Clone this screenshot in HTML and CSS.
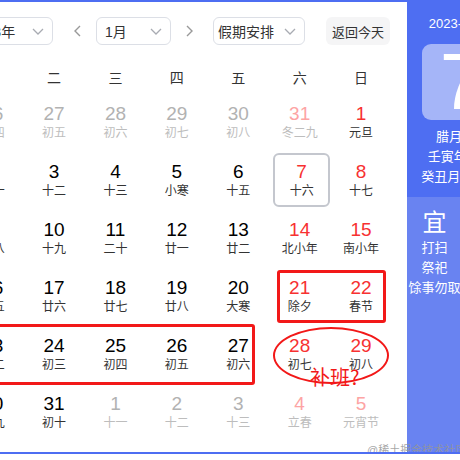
FILE: index.html
```html
<!DOCTYPE html>
<html lang="zh-CN">
<head>
    <meta charset="UTF-8">
    <title>万年历</title>
    <link rel="stylesheet" href="styles.css">
</head>
<body>
    <div class="page">
        <div class="cal">
            <div class="toolbar">
                <div class="select year">
                    <span>2023年</span>
                    <svg class="chev" viewBox="0 0 12 7"><polyline points="1,1 6,6 11,1"/></svg>
                </div>
                <span class="arrow"><svg viewBox="0 0 8 12"><polyline points="7,1 2,6 7,11"/></svg></span>
                <div class="select month">
                    <span>1月</span>
                    <svg class="chev" viewBox="0 0 12 7"><polyline points="1,1 6,6 11,1"/></svg>
                </div>
                <span class="arrow next"><svg viewBox="0 0 8 12"><polyline points="1,1 6,6 1,11"/></svg></span>
                <div class="select holiday">
                    <span>假期安排</span>
                    <svg class="chev" viewBox="0 0 12 7"><polyline points="1,1 6,6 11,1"/></svg>
                </div>
                <button class="back-btn">返回今天</button>
            </div>

            <div class="weekdays">
                <span>一</span><span>二</span><span>三</span><span>四</span><span>五</span><span>六</span><span>日</span>
            </div>

            <div class="days">
                <div class="day other"><b>26</b><i>初四</i></div>
                <div class="day other"><b>27</b><i>初五</i></div>
                <div class="day other"><b>28</b><i>初六</i></div>
                <div class="day other"><b>29</b><i>初七</i></div>
                <div class="day other"><b>30</b><i>初八</i></div>
                <div class="day other red"><b>31</b><i>冬二九</i></div>
                <div class="day red"><b>1</b><i>元旦</i></div>

                <div class="day"><b>2</b><i>十一</i></div>
                <div class="day"><b>3</b><i>十二</i></div>
                <div class="day"><b>4</b><i>十三</i></div>
                <div class="day"><b>5</b><i>小寒</i></div>
                <div class="day"><b>6</b><i>十五</i></div>
                <div class="day red today"><b>7</b><i>十六</i></div>
                <div class="day red"><b>8</b><i>十七</i></div>

                <div class="day"><b>9</b><i>十八</i></div>
                <div class="day"><b>10</b><i>十九</i></div>
                <div class="day"><b>11</b><i>二十</i></div>
                <div class="day"><b>12</b><i>廿一</i></div>
                <div class="day"><b>13</b><i>廿二</i></div>
                <div class="day red"><b>14</b><i>北小年</i></div>
                <div class="day red"><b>15</b><i>南小年</i></div>

                <div class="day"><b>16</b><i>廿五</i></div>
                <div class="day"><b>17</b><i>廿六</i></div>
                <div class="day"><b>18</b><i>廿七</i></div>
                <div class="day"><b>19</b><i>廿八</i></div>
                <div class="day"><b>20</b><i>大寒</i></div>
                <div class="day red"><b>21</b><i>除夕</i></div>
                <div class="day red"><b>22</b><i>春节</i></div>

                <div class="day"><b>23</b><i>初二</i></div>
                <div class="day"><b>24</b><i>初三</i></div>
                <div class="day"><b>25</b><i>初四</i></div>
                <div class="day"><b>26</b><i>初五</i></div>
                <div class="day"><b>27</b><i>初六</i></div>
                <div class="day red"><b>28</b><i>初七</i></div>
                <div class="day red"><b>29</b><i>初八</i></div>

                <div class="day"><b>30</b><i>初九</i></div>
                <div class="day"><b>31</b><i>初十</i></div>
                <div class="day other"><b>1</b><i>十一</i></div>
                <div class="day other"><b>2</b><i>十二</i></div>
                <div class="day other"><b>3</b><i>十三</i></div>
                <div class="day other red"><b>4</b><i>立春</i></div>
                <div class="day other red"><b>5</b><i>元宵节</i></div>
            </div>
        </div>

        <aside class="panel">
            <div class="panel-top">
                <div class="panel-date">2023-01-07</div>
                <div class="big-day">7</div>
                <div class="lunar">腊月十六</div>
                <div class="lunar">壬寅年 虎年</div>
                <div class="lunar">癸丑月 乙亥日</div>
            </div>
            <div class="panel-bottom">
                <div class="yiji">
                    <div class="yiji-title">宜</div>
                    <div>打扫</div>
                    <div>祭祀</div>
                    <div>馀事勿取</div>
                </div>
                <div class="yiji">
                    <div class="yiji-title">忌</div>
                    <div>诸事不宜</div>
                </div>
            </div>
        </aside>

        <!-- hand drawn notes on top of the screenshot -->
        <div class="mark mark-festival"></div>
        <div class="mark mark-week"></div>
        <div class="mark mark-ring"></div>
        <div class="mark-text">补班?</div>

        <div class="watermark">@稀土掘金技术社区</div>
    </div>
</body>
</html>
```

FILE: styles.css
```css
body {
    margin: 0;
    background-color: #fff;
    font-family: "Liberation Sans", "Noto Sans CJK SC", sans-serif;
    color: #333;
    overflow: hidden;
}

.page {
    position: relative;
    display: flex;
    width: 460px;
    height: 454px;
    box-sizing: border-box;
    border-top: 2px solid #4e6ef2;
    border-bottom: 2px solid #4e6ef2;
    overflow: hidden;
}

/* calendar, left part is cut off in the shot */
.cal {
    flex: none;
    width: 426px;
    margin-left: -36px;
}

.toolbar {
    display: flex;
    align-items: center;
    height: 28px;
    margin-top: 15px;
}

.select {
    display: flex;
    align-items: center;
    justify-content: space-between;
    height: 28px;
    box-sizing: border-box;
    padding: 0 8px;
    border: 1px solid #dcdfe6;
    border-radius: 6px;
    font-size: 14px;
    color: #333;
}

.select.year {
    width: 92px;
    margin-left: -3px;
}

.select.month {
    width: 75px;
}

.select.holiday {
    width: 92px;
    padding-left: 4px;
}

.chev {
    width: 12px;
    height: 7px;
    fill: none;
    stroke: #a8abb2;
    stroke-width: 1.3;
}

.arrow {
    display: flex;
    justify-content: center;
    width: 16px;
    margin: 0 11px 0 16px;
}

.arrow.next {
    margin: 0 15px 0 11px;
}

.arrow svg {
    width: 8px;
    height: 12px;
    fill: none;
    stroke: #999;
    stroke-width: 1.4;
}

.back-btn {
    margin-left: auto;
    width: 64px;
    height: 28px;
    padding: 0;
    border: none;
    border-radius: 6px;
    background-color: #f5f5f6;
    font-family: inherit;
    font-size: 13px;
    color: #333;
}

.weekdays,
.days {
    display: grid;
    grid-template-columns: repeat(7, 57.4px);
    column-gap: 4px;
}

.weekdays {
    margin-top: 20px;
    height: 27px;
    line-height: 27px;
    font-size: 14px;
    text-align: center;
}

.days {
    margin-top: 3px;
    grid-auto-rows: 54px;
    row-gap: 4px;
}

.day {
    display: flex;
    flex-direction: column;
    align-items: center;
    justify-content: center;
    box-sizing: border-box;
    padding-bottom: 2px;
    border: 2px solid transparent;
    border-radius: 6px;
}

.day b {
    font-weight: normal;
    font-size: 19px;
    line-height: 23px;
    color: #000;
}

.day i {
    font-style: normal;
    font-size: 12px;
    line-height: 16px;
    color: #333;
}

.day.red b {
    color: #f73131;
}

.day.other b {
    color: #b2b2b2;
}

.day.other i {
    color: #bdbdbd;
}

.day.other.red b {
    color: #fda4a4;
}

.day.today {
    border-color: #c4c7ce;
    margin-left: 2px;
    margin-right: -2px;
}

/* right info panel */
.panel {
    flex: none;
    display: flex;
    flex-direction: column;
    width: 110px;
    margin-left: 17px;
    color: #fff;
    text-align: center;
}

.panel-top {
    height: 195px;
    background-color: #4e6ef2;
}

.panel-date {
    margin-top: 12px;
    font-size: 13px;
    line-height: 20px;
}

.big-day {
    width: 80px;
    height: 76px;
    margin: 10px auto 0;
    border-radius: 9px;
    background-color: #a5b5f8;
    font-size: 80px;
    line-height: 76px;
}

.lunar {
    font-size: 13px;
    line-height: 20px;
}

.big-day + .lunar {
    margin-top: 7px;
}

.panel-bottom {
    flex: 1;
    display: flex;
    background-color: #6983f1;
}

.yiji {
    width: 55px;
    font-size: 13px;
    line-height: 20px;
}

.yiji-title {
    margin-top: 11px;
    font-size: 24px;
    line-height: 30px;
}

/* red annotations */
.mark {
    position: absolute;
    box-sizing: border-box;
    border: 3px solid #f21818;
    border-radius: 3px;
}

.mark-festival {
    left: 277px;
    top: 268px;
    width: 109px;
    height: 53px;
}

.mark-week {
    left: -10px;
    top: 322px;
    width: 265px;
    height: 61px;
}

.mark-ring {
    left: 273px;
    top: 325px;
    width: 116px;
    height: 57px;
    border-width: 2px;
    border-radius: 50%;
}

.mark-text {
    position: absolute;
    left: 310px;
    top: 362px;
    font-family: "Noto Sans CJK SC", sans-serif;
    font-size: 20px;
    line-height: 26px;
    color: #f21818;
}

.watermark {
    position: absolute;
    left: 367px;
    top: 441px;
    font-size: 11px;
    line-height: 14px;
    color: rgba(150, 150, 150, 0.85);
    white-space: nowrap;
}
```
